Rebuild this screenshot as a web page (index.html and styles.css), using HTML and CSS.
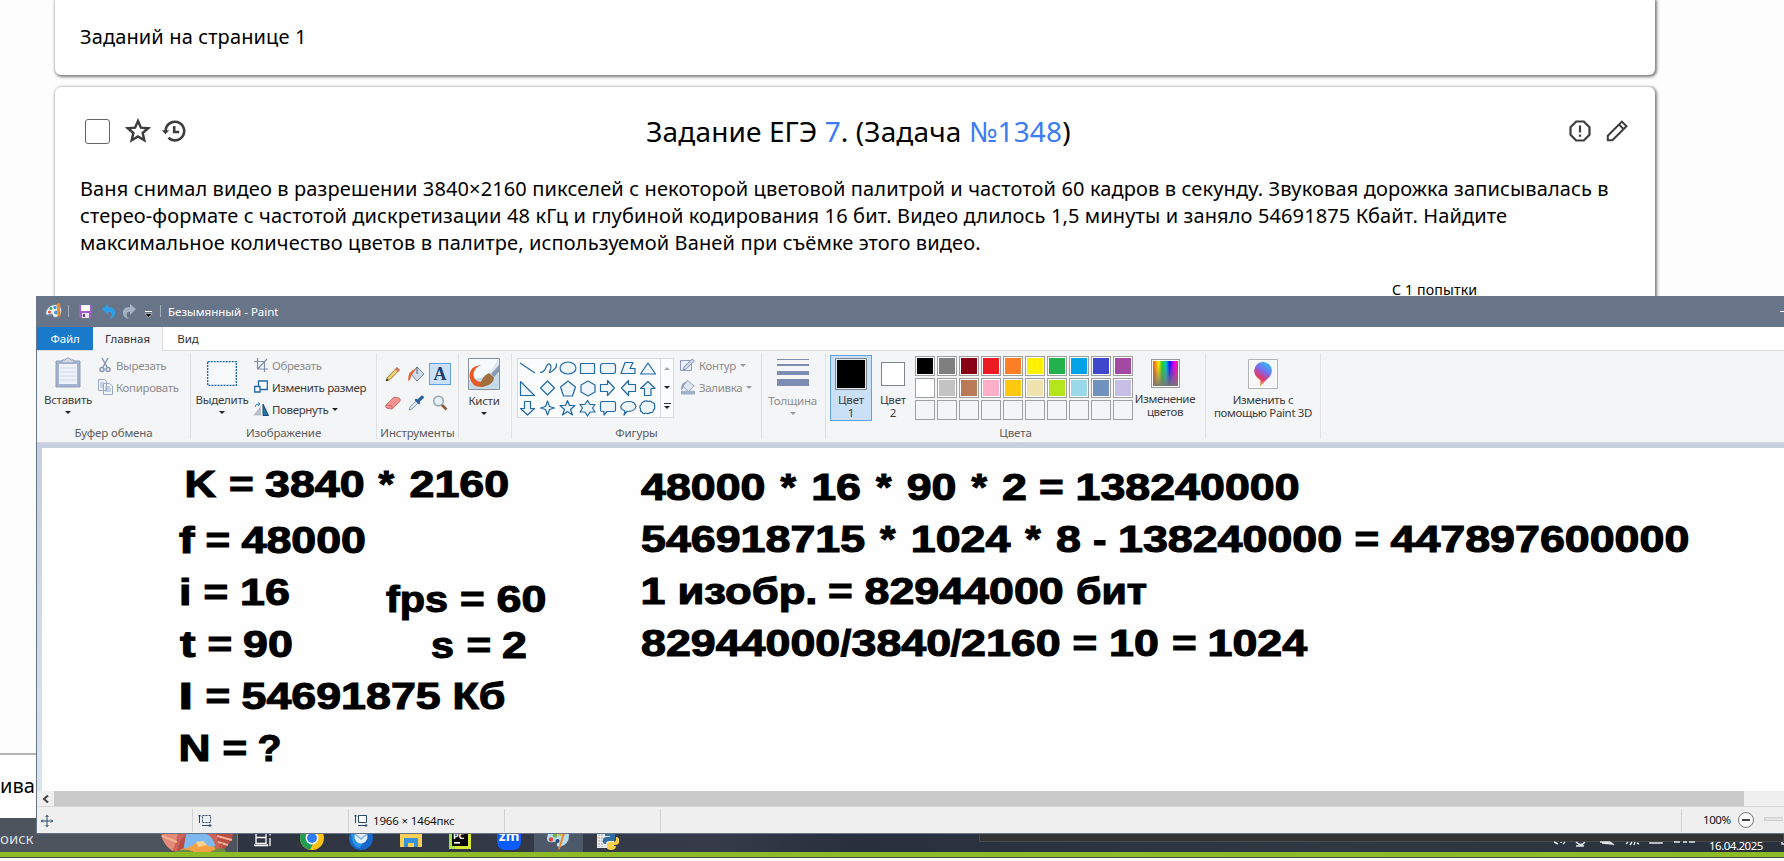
FILE: index.html
```
<!DOCTYPE html>
<html lang="ru">
<head>
<meta charset="utf-8">
<title>Задание ЕГЭ</title>
<link rel="stylesheet" href="styles.css">
</head>
<body>
<main class="page">
  <section class="card card-count">Заданий на странице 1</section>
  <section class="card card-task">
    <header class="task-head">
      <div class="task-tools">
        <span class="checkbox"></span>
        <svg class="ic-star" width="26" height="26" viewBox="0 0 24 24" fill="none" stroke="#3d3d3d" stroke-width="2.3"><path d="M12 2.8l2.7 6.1 6.6.6-5 4.4 1.5 6.6-5.800-3.500-5.800 3.500 1.500-6.600-5-4.400 6.600-.6z"/></svg>
        <svg class="ic-history" width="25" height="24" viewBox="0 0 25 24" fill="none" stroke="#3d3d3d" stroke-width="2.600"><path d="M4.600 12a9.300 9.300 0 1 1 2.800 6.700"/><path d="M13.200 7v6h5"/><path d="M.8 11.200h7.400l-3.700 4z" fill="#3d3d3d" stroke="none"/></svg>
      </div>
      <h1 class="task-title">Задание ЕГЭ <a>7</a>. (Задача <a>№1348</a>)</h1>
      <div class="task-tools">
        <svg width="22" height="22" viewBox="0 0 22 22" fill="none" stroke="#3d3d3d" stroke-width="2.200"><path d="M7.200 1.500h7.600l5.700 5.700v7.600l-5.700 5.700H7.200l-5.700-5.700V7.200z"/><path d="M11 5.500v7M11 14.500v2.200"/></svg>
        <svg class="ic-pen" width="22" height="22" viewBox="0 0 22 22" fill="none" stroke="#3d3d3d" stroke-width="2"><path d="M1.800 20.300v-4.600L15.900 1.600l4.600 4.600L6.400 20.300zM13 4.500l4.600 4.600"/></svg>
      </div>
    </header>
    <p class="task-text">Ваня снимал видео в разрешении 3840×2160 пикселей с некоторой цветовой палитрой и частотой 60 кадров в секунду. Звуковая дорожка записывалась в<br>стерео-формате с частотой дискретизации 48 кГц и глубиной кодирования 16 бит. Видео длилось 1,5 минуты и заняло 54691875 Кбайт. Найдите<br>максимальное количество цветов в палитре, используемой Ваней при съёмке этого видео.</p>
    <p class="attempt">С 1 попытки</p>
  </section>
  <section class="card-bottom">ива</section>
</main>

<footer class="taskbar">
  <div class="search">
    <span>оиск</span>
    <svg width="72" height="34" viewBox="0 0 72 34"><path d="M0 14Q4 32 16 34h42q12-6 14-20V8H0z" fill="#cd6258"/><path d="M0 17q10-4 17-1l-5 17Q3 28 0 17z" fill="#e58a78"/><path d="M17 34q1-20 19-20t19 20z" fill="#7db9ee"/><path d="M16 34l3-11 6-7-3 18zM72 17q-9-4-17-1l5 16 5-3 6-8z" fill="#bd4b45"/><path d="M20 31q9-1 15-6l7-1 5 4 7 1v5H20z" fill="#f3a044"/><path d="M35 24l7-1 4 4-9 2z" fill="#fbd18b"/><path d="M1 18l15 6M56 18l15 4M57 24l10 3" stroke="#f6b095" stroke-width="2"/><path d="M14 34q8-4 18 0zM50 34q9-5 14-2v2zM60 31l1-6M56 32l-3-4" fill="#6f8a43" stroke="#6f8a43"/></svg>
  </div>
  <div class="apps">
    <span class="app"><svg width="18" height="24" viewBox="0 0 18 24" fill="none" stroke="#fff" stroke-width="1.300"><path d="M2 7v4.500M12 7v4.500M2 11.500h10v6H2zM.5 20v-1.500M.5 19.500h13V18M16 7v2.500M16 12v8"/></svg></span>
    <span class="app"><svg width="24" height="24" viewBox="0 0 24 24"><circle cx="12" cy="12" r="12" fill="#fbc116"/><path d="M12 12L1.600 6A12 12 0 0 0 10 23.800L15 14z" fill="#1f9d55"/><path d="M1.600 6A12 12 0 0 1 22.400 6H12z" fill="#e33b2e"/><circle cx="12" cy="12" r="6.400" fill="#fff"/><circle cx="12" cy="12" r="5" fill="#2f7df0"/></svg></span>
    <span class="app"><svg width="24" height="24" viewBox="0 0 24 24"><circle cx="12" cy="12" r="12" fill="#1669c9"/><path d="M3 3q9-6 17 1l-9 18Q0 20 3 3z" fill="#2d93ea"/><circle cx="12" cy="11" r="6.500" fill="#e5f1fb"/><path d="M6 8l6 5 6-5" fill="none" stroke="#7cb2e4" stroke-width="1.600"/></svg></span>
    <span class="app"><svg width="22" height="22" viewBox="0 0 22 22"><path d="M0 2h9l2 2h11v17H0z" fill="#f9cf57"/><path d="M4 21v-9h14v9h-4v-4H8v4z" fill="#3a92d8"/></svg></span>
    <span class="app"><svg width="22" height="24" viewBox="0 0 22 24"><path d="M0 0h22v23H0z" fill="#d7e93a"/><path d="M0 0h6v23H0z" fill="#a9e045"/><path d="M3 3h16v17H3z" fill="#050505"/><path d="M5 16h6v1.600H5z" fill="#fff"/><text x="4" y="13" class="pc">PC</text></svg></span>
    <span class="app zm">zm</span>
    <span class="app app-active"><svg width="22" height="24" viewBox="0 0 22 24"><path d="M0 14Q0 2 11 2t11 8-9 11q-4 0-3-3t-4-2-6-2z" fill="#b8dcf0"/><circle cx="4" cy="13.500" r="2.200" fill="#e3473c"/><circle cx="8" cy="9.500" r="2.200" fill="#68b443"/><circle cx="13" cy="8.500" r="2" fill="#d8c04a"/><circle cx="10.500" cy="15" r="2" fill="#2a4c78"/><path d="M17 2l2.500 1-6.500 20-2 1z" fill="#ea8b2d"/></svg></span>
    <span class="app"><svg width="24" height="24" viewBox="0 0 24 24"><path d="M1 1h17v21H1z" fill="#e9e9e9"/><path d="M3 2v19M6 2v19" stroke="#a9a9a9" stroke-dasharray="2 1"/><path d="M9 9q0-3 5-3t5 3v4q0 2-3 2h-3q-3 0-3 3-4 0-3-4 0-3 4-3h3v-1H9z" fill="#2f6da5"/><path d="M20 11q4 0 3 5 0 3-4 3h-3v1h4q0 4-5 4t-4-4v-2q0-2 3-2h3q3 0 3-3z" fill="#f8cf46"/></svg></span>
  </div>
  <div class="tooltip-strip"></div>
  <div class="tray">
    <svg width="220" height="12" viewBox="0 0 220 12" fill="none" stroke="#e6e8ea" stroke-width="1.400"><path d="M4 0l4 2M11 0v1M15 0l-2 2M26 0q5 5 9 0M30 2v2M26 4h8M50 0h10M52 1l11 1M60 0l4 3M76 2l2-2M80 3l2-3M84 3l1-3M87 1l2 1M100 0v1h12V0M124 0h6M133 0h4M139 0h6M232 0v2h5"/></svg>
    <span class="date">16.04.2025</span>
  </div>
</footer>
<div class="green-line"></div>

<div class="paint">
  <div class="titlebar">
    <svg width="131" height="31" viewBox="0 0 131 31">
      <path d="M9 17q2-8 10-8 6 1 5 7-1 5-6 5-2 0-2-2t-3-1q-4 2-4-1z" fill="#eef4f8" stroke="#9cc4dc" stroke-width=".6"/><circle cx="12.500" cy="16" r="1.500" fill="#e64c3c"/><circle cx="14" cy="12.500" r="1.500" fill="#4aa84a"/><circle cx="18" cy="11.500" r="1.500" fill="#2f8fd3"/><circle cx="19" cy="16.500" r="2" fill="#4f9bc9"/><path d="M19.500 8l2-1 2 1-.5 3 .5 9-3 1-.5-9z" fill="#e98a2d"/>
      <path d="M31.500 9v12M123.500 9v12" stroke="#a2acb8"/>
      <path d="M42 9h13v13H42z" fill="#a15cc7"/><path d="M44 9h9v6h-9z" fill="#fff"/><path d="M45 17h7v5h-7z" fill="#e8e4f0"/><path d="M46 18h2v3h-2z" fill="#5b3a86"/>
      <path d="M65 13l6-5v3q8 0 7 7-1 4-6 5 4-4 2-6-1-2-3-1v3z" fill="#2d9fea"/>
      <path d="M99 13l-6-5v3q-8 0-7 7 1 4 6 5-4-4-2-6 1-2 3-1v3z" fill="#a5b2c4"/>
      <path d="M108 15.500h7" stroke="#fff"/><path d="M108 17.500h7l-3.500 4z" fill="#000" stroke="#fff" stroke-width=".5"/>
    </svg>
    <span class="title">Безымянный - Paint</span>
    <span class="minimize"></span>
  </div>
  <nav class="tabs"><span class="tab tab-file">Файл</span><span class="tab tab-home">Главная</span><span class="tab tab-view">Вид</span></nav>
  <div class="ribbon">
    <div class="group g-clip">
      <div class="body">
        <div class="big"><svg width="26" height="31" viewBox="0 0 26 31"><path d="M1 4h24v26H1z" fill="#a3b2cd" stroke="#8f9fbd"/><path d="M4 7h18v20H4z" fill="#eef2fa"/><path d="M5 11h16M5 15h16M5 19h16M5 23h16" stroke="#cdd7e8"/><path d="M7 3h3q3-4 6 0h3v3H7z" fill="#d0d8e6" stroke="#8f9fbd"/></svg><span>Вставить</span><i class="arr"></i></div>
        <div class="rows">
          <div class="row off"><svg width="16" height="16" viewBox="0 0 16 16" fill="none" stroke="#8797b5" stroke-width="1.500"><path d="M5 1l5 9M11 1l-5 9"/><circle cx="5" cy="12.500" r="2"/><circle cx="11" cy="12.500" r="2"/></svg>Вырезать</div>
          <div class="row off"><svg width="16" height="16" viewBox="0 0 16 16" fill="#f1f5fb" stroke="#9aaac6"><path d="M1.500.5h6l2 2v9h-8zM6.500 4.500h6l3 2.500v8.500h-9z"/><path d="M8 8h5M8 10h6M8 12h6M3 4h4M3 6h3M3 8h3"/></svg>Копировать</div>
        </div>
      </div>
      <div class="label">Буфер обмена</div>
    </div>
    <div class="group g-image">
      <div class="body">
        <div class="big"><svg width="30" height="31" viewBox="0 0 30 31"><path d="M.7 4.700h28.600v23.600H.7z" fill="#f6fafd" stroke="#1c62a6" stroke-width="1.300" stroke-dasharray="2 1"/></svg><span>Выделить</span><i class="arr"></i></div>
        <div class="rows">
          <div class="row off"><svg width="14" height="14" viewBox="0 0 14 14" fill="none" stroke="#8090ad" stroke-width="1.200"><path d="M3.500 0v11H14M0 3.500h10.500V14M4 10.500L13 1"/></svg>Обрезать</div>
          <div class="row"><svg width="14" height="14" viewBox="0 0 14 14" fill="#fff" stroke="#1f66a8" stroke-width="1.300"><path d="M4.500 1h8.800v8.500H4.500z"/><path d="M.7 6.500H6v5.500H.7z"/></svg>Изменить размер</div>
          <div class="row"><svg width="16" height="14" viewBox="0 0 16 14"><path d="M8 4v9.500H0z" fill="#b9bfc7"/><path d="M10 2l5.500 11.500H10z" fill="#2676a8" stroke="#174a73"/><path d="M2 5q0-3 4-3M5 .5L7 2 5 4" fill="none" stroke="#2f7ed0"/></svg>Повернуть<i class="arr"></i></div>
        </div>
      </div>
      <div class="label">Изображение</div>
    </div>
    <div class="group g-tools">
      <div class="tools">
        <span><svg width="16" height="16" viewBox="0 0 16 16"><path d="M1 15l1.500-3.500L12 1.500l2.500 2.500L5 13.500z" fill="#f2d06b" stroke="#7b6433" stroke-width=".8"/><path d="M12 1.500l2.500 2.500L13 6l-3-3z" fill="#d6706c"/><path d="M1 15l.8-2.500 1.700 1.700z" fill="#222"/></svg></span>
        <span><svg width="18" height="16" viewBox="0 0 18 16"><path d="M10 1l7 7-7 7-6-7z" fill="#cfdbe8" stroke="#6f8296"/><path d="M10 1v7" stroke="#566"/><path d="M9 3Q1 4 1 15q3-1 3-5z" fill="#e4623a"/></svg></span>
        <span class="tool-on">A</span>
        <span><svg width="16" height="14" viewBox="0 0 16 14"><path d="M1 9l7-7q1-1 2-.8l4.500 1q1 .8.500 3l-7 7q-1 1-2 .8l-4.500-1Q0 11 1 9z" fill="#f19490" stroke="#b95c5c" stroke-width=".8"/><path d="M1 9l6 1v3" fill="none" stroke="#c76a69"/></svg></span>
        <span><svg width="16" height="16" viewBox="0 0 16 16"><path d="M1 15l1-3 6-6 2 2-6 6z" fill="#dceaf5" stroke="#6d8aa5" stroke-width=".8"/><path d="M6.500 5l1.500-1.500 1.500 1L13 1q1-1 2.300.2t0 2.300L11.500 7l1 1-1.500 1.500z" fill="#2a5f9e"/></svg></span>
        <span><svg width="16" height="16" viewBox="0 0 16 16"><circle cx="6.500" cy="6" r="4.800" fill="#e4f1fb" stroke="#93a2b0" stroke-width="1.400"/><path d="M10 10l4.500 4.500" stroke="#8b5a3a" stroke-width="2.600"/></svg></span>
      </div>
      <div class="label">Инструменты</div>
    </div>
    <div class="group g-brush">
      <div class="big"><svg width="32" height="32" viewBox="0 0 32 32"><path d="M.5.5h31v31H.5z" fill="#f4f9fc" stroke="#8a9097"/><path d="M1 22l30-6v15H1z" fill="#c6dcea"/><path d="M13 7Q1 8 1.500 19q2 10 12 10 6 0 4-5Q6 25 5.500 17q0-7 7.500-10z" fill="#ea5a24"/><path d="M12 28.500q1-10 9-13.500l5 4.500q-1 9-14 9z" fill="#a0713f"/><path d="M22 15L31 1v13l-5 5z" fill="#8b9bb3"/><path d="M21.500 15L31 1v6l-8 9z" fill="#dfe7f0"/></svg><span>Кисти</span><i class="arr"></i></div>
    </div>
    <div class="group g-shapes">
      <div class="body">
        <div class="gallery">
          <svg width="142" height="58" viewBox="0 0 142 58" fill="#eef6fb" stroke="#2468a5" stroke-width="1.200" stroke-linejoin="round">
            <path d="M2 4l15 10"/><path d="M22 13.500q4 0 6-5t4-3 0 6 3 0 3-7" fill="none"/><ellipse cx="50" cy="9" rx="8" ry="6"/><path d="M62.500 4.500h14v10h-14z"/><rect x="82.500" y="4.500" width="15" height="10" rx="2.500"/><path d="M103 14.500l4-11h8l-3 6h5v5z"/><path d="M130 4l7.500 11h-15z"/>
            <path d="M2.500 22.500l14 14h-14z"/><path d="M29.500 22l7 7-7 7-7-7z"/><path d="M50 22l7.500 6-3 9h-9l-3-9z"/><path d="M70 22l7 4v7l-7 4-7-4v-7z"/><path d="M82.500 25.500h7v-4l7 7.500-7 7.500v-4h-7z"/><path d="M117.500 25.500h-7v-4l-7 7.500 7 7.500v-4h7z"/><path d="M126.500 36.500v-7h-4l7.500-7 7 7h-4v7z"/>
            <path d="M6.500 42.500v7h-4l7 6.500 7-6.500h-4v-7z"/><path d="M29.500 42l2 5.500 5 1.500-5 1.500-2 5.500-2-5.500-5-1.500 5-1.500z"/><path d="M49.500 41.500l2 5h5.500l-4.500 4 2 5.500-5-3.500-5 3.500 2-5.500-4.500-4H47.500z"/><path d="M69.500 41.500l2.500 4h5l-2.500 3.500 2.500 4h-5l-2.500 4-2.500-4h-5l2.500-4-2.500-3.500h5z"/><path d="M84 42.500h12q1.500 0 1.500 1.500v7q0 1.500-1.500 1.500h-7l-3 3.500v-3.500h-2q-1.500 0-1.500-1.500v-7q0-1.500 1.500-1.500z"/><path d="M106 56l1-4q-5-2-4-5 2-4.500 8-4.500t7 5q-1 5-9 5z"/><path d="M125 43q3-2 5-.5 3-1 4 1 3 0 2.500 3 1 3-1 4.500 0 3-3.500 2.500-2 2-4 .5-3 1.500-4-1-2-.5-1.500-3-1.500-3 .5-4 0-2 2-3z"/>
          </svg>
          <div class="scroll"><i class="arr up"></i><i class="arr"></i><i class="arr more"></i></div>
        </div>
        <div class="rows">
          <div class="row off"><svg width="16" height="14" viewBox="0 0 16 14" fill="#e9eef7" stroke="#8c9cba"><path d="M.5 2.500h11v10H.5z"/><path d="M3 12l1-3 8-8 2.500 2L6 11z" fill="#c9d4e6"/></svg>Контур<i class="arr dim"></i></div>
          <div class="row off"><svg width="16" height="16" viewBox="0 0 17 16"><path d="M1 12h15v4H1z" fill="#9fb0cc"/><path d="M8 1l7 6-6 6-6-6z" fill="#dfe6f1" stroke="#8c9cba"/><path d="M8 2Q1 3 1 11q3 0 3-5z" fill="#8c9cba"/></svg>Заливка<i class="arr dim"></i></div>
        </div>
      </div>
      <div class="label">Фигуры</div>
    </div>
    <div class="group g-size">
      <div class="big off"><svg width="32" height="32" viewBox="0 0 32 32" fill="#7d8eb2"><path d="M0 1h32v1H0zM0 6h32v2H0zM0 13h32v4H0zM0 21h32v7H0z"/></svg><span>Толщина</span><i class="arr dim"></i></div>
    </div>
    <div class="group g-colors">
      <div class="body">
        <div class="color color-on"><b class="well well-black"></b><span>Цвет<br>1</span></div>
        <div class="color"><b class="well well-white"></b><span>Цвет<br>2</span></div>
        <div class="palette">
          <b class="c1"></b><b class="c2"></b><b class="c3"></b><b class="c4"></b><b class="c5"></b><b class="c6"></b><b class="c7"></b><b class="c8"></b><b class="c9"></b><b class="c10"></b>
          <b class="c11"></b><b class="c12"></b><b class="c13"></b><b class="c14"></b><b class="c15"></b><b class="c16"></b><b class="c17"></b><b class="c18"></b><b class="c19"></b><b class="c20"></b>
          <b></b><b></b><b></b><b></b><b></b><b></b><b></b><b></b><b></b><b></b>
        </div>
        <div class="wide"><b class="spectrum"></b><span>Изменение<br>цветов</span></div>
      </div>
      <div class="label">Цвета</div>
    </div>
    <div class="group g-3d">
      <div class="wide"><svg width="30" height="30" viewBox="0 0 30 30"><defs><linearGradient id="drop" x1="0.8" y1="0" x2="0.3" y2="1"><stop offset="0" stop-color="#27c5f2"/><stop offset=".4" stop-color="#7a6cf0"/><stop offset=".68" stop-color="#e0356f"/><stop offset="1" stop-color="#f7b52c"/></linearGradient></defs><path d="M.5.500h29v29H.5z" fill="#f6f6f7" stroke="#b0b2b5"/><path d="M1.500 1.500h27v27h-27z" fill="none" stroke="#fff"/><path d="M15 3a8.600 8.600 0 0 1 8.800 9q0 5-6.300 9.500L12 27.500l.5-6Q6 17 6.200 11.500A8.600 8.600 0 0 1 15 3z" fill="url(#drop)"/></svg><span>Изменить с<br>помощью Paint 3D</span></div>
    </div>
  </div>
  <div class="workspace">
    <svg class="canvas" width="1742" height="343" viewBox="42 448 1742 343">
      <g class="notes">
        <text y="496.500"><tspan x="184.500" textLength="31.500" lengthAdjust="spacingAndGlyphs">K</tspan> <tspan x="229" textLength="24.700" lengthAdjust="spacingAndGlyphs">=</tspan> <tspan x="265" textLength="99.600" lengthAdjust="spacingAndGlyphs">3840</tspan> <tspan x="378.500" textLength="15.500" lengthAdjust="spacingAndGlyphs">*</tspan> <tspan x="409.500" textLength="99.600" lengthAdjust="spacingAndGlyphs">2160</tspan></text>
        <text y="552.500"><tspan x="179" textLength="15.500" lengthAdjust="spacingAndGlyphs">f</tspan> <tspan x="205.500" textLength="24.700" lengthAdjust="spacingAndGlyphs">=</tspan> <tspan x="241.500" textLength="124.500" lengthAdjust="spacingAndGlyphs">48000</tspan></text>
        <text y="604.500"><tspan x="179" textLength="12.500" lengthAdjust="spacingAndGlyphs">i</tspan> <tspan x="203.500" textLength="24.700" lengthAdjust="spacingAndGlyphs">=</tspan> <tspan x="240" textLength="49.800" lengthAdjust="spacingAndGlyphs">16</tspan></text>
        <text y="611.500"><tspan x="386" textLength="62" lengthAdjust="spacingAndGlyphs">fps</tspan> <tspan x="460" textLength="24.700" lengthAdjust="spacingAndGlyphs">=</tspan> <tspan x="496.500" textLength="49.800" lengthAdjust="spacingAndGlyphs">60</tspan></text>
        <text y="656.500"><tspan x="180" textLength="15.500" lengthAdjust="spacingAndGlyphs">t</tspan> <tspan x="207.500" textLength="24.700" lengthAdjust="spacingAndGlyphs">=</tspan> <tspan x="243" textLength="49.800" lengthAdjust="spacingAndGlyphs">90</tspan></text>
        <text y="657.500"><tspan x="431" textLength="23" lengthAdjust="spacingAndGlyphs">s</tspan> <tspan x="466.500" textLength="24.700" lengthAdjust="spacingAndGlyphs">=</tspan> <tspan x="502" textLength="24.900" lengthAdjust="spacingAndGlyphs">2</tspan></text>
        <text y="708.500"><tspan x="178.500" textLength="14.500" lengthAdjust="spacingAndGlyphs">I</tspan> <tspan x="205.500" textLength="24.700" lengthAdjust="spacingAndGlyphs">=</tspan> <tspan x="241.500" textLength="199.200" lengthAdjust="spacingAndGlyphs">54691875</tspan> <tspan x="452.500" textLength="53" lengthAdjust="spacingAndGlyphs">Кб</tspan></text>
        <text y="760.500"><tspan x="178.500" textLength="32" lengthAdjust="spacingAndGlyphs">N</tspan> <tspan x="222.500" textLength="24.700" lengthAdjust="spacingAndGlyphs">=</tspan> <tspan x="257.500" textLength="24" lengthAdjust="spacingAndGlyphs">?</tspan></text>
        <text y="499.500"><tspan x="641" textLength="124.500" lengthAdjust="spacingAndGlyphs">48000</tspan> <tspan x="780.500" textLength="15.500" lengthAdjust="spacingAndGlyphs">*</tspan> <tspan x="811.200" textLength="49.800" lengthAdjust="spacingAndGlyphs">16</tspan> <tspan x="876" textLength="15.500" lengthAdjust="spacingAndGlyphs">*</tspan> <tspan x="906.700" textLength="49.800" lengthAdjust="spacingAndGlyphs">90</tspan> <tspan x="971.500" textLength="15.500" lengthAdjust="spacingAndGlyphs">*</tspan> <tspan x="1002" textLength="24.900" lengthAdjust="spacingAndGlyphs">2</tspan> <tspan x="1039" textLength="24.700" lengthAdjust="spacingAndGlyphs">=</tspan> <tspan x="1075.500" textLength="224.100" lengthAdjust="spacingAndGlyphs">138240000</tspan></text>
        <text y="551.500"><tspan x="641" textLength="224.100" lengthAdjust="spacingAndGlyphs">546918715</tspan> <tspan x="880" textLength="15.500" lengthAdjust="spacingAndGlyphs">*</tspan> <tspan x="910.800" textLength="99.600" lengthAdjust="spacingAndGlyphs">1024</tspan> <tspan x="1025.300" textLength="15.500" lengthAdjust="spacingAndGlyphs">*</tspan> <tspan x="1056" textLength="24.900" lengthAdjust="spacingAndGlyphs">8</tspan> <tspan x="1093" textLength="13.500" lengthAdjust="spacingAndGlyphs">-</tspan> <tspan x="1118" textLength="224.100" lengthAdjust="spacingAndGlyphs">138240000</tspan> <tspan x="1354.500" textLength="24.700" lengthAdjust="spacingAndGlyphs">=</tspan> <tspan x="1390.500" textLength="298.800" lengthAdjust="spacingAndGlyphs">447897600000</tspan></text>
        <text y="603.500"><tspan x="640.500" textLength="24.900" lengthAdjust="spacingAndGlyphs">1</tspan> <tspan x="677.500" textLength="140" lengthAdjust="spacingAndGlyphs">изобр.</tspan> <tspan x="828" textLength="24.700" lengthAdjust="spacingAndGlyphs">=</tspan> <tspan x="864.500" textLength="199.200" lengthAdjust="spacingAndGlyphs">82944000</tspan> <tspan x="1076" textLength="71" lengthAdjust="spacingAndGlyphs">бит</tspan></text>
        <text y="655.500"><tspan x="641" textLength="199.200" lengthAdjust="spacingAndGlyphs">82944000</tspan><tspan x="840.500" textLength="10.800" lengthAdjust="spacingAndGlyphs">/</tspan><tspan x="851.500" textLength="99.600" lengthAdjust="spacingAndGlyphs">3840</tspan><tspan x="950.500" textLength="10.800" lengthAdjust="spacingAndGlyphs">/</tspan><tspan x="961" textLength="99.600" lengthAdjust="spacingAndGlyphs">2160</tspan> <tspan x="1072.500" textLength="24.700" lengthAdjust="spacingAndGlyphs">=</tspan> <tspan x="1109" textLength="49.800" lengthAdjust="spacingAndGlyphs">10</tspan> <tspan x="1172" textLength="24.700" lengthAdjust="spacingAndGlyphs">=</tspan> <tspan x="1207.500" textLength="99.600" lengthAdjust="spacingAndGlyphs">1024</tspan></text>
      </g>
    </svg>
  </div>
  <div class="hscroll"><span class="hbtn"><svg width="7" height="8" viewBox="0 0 7 8"><path d="M6 .5L2 4l4 3.500" fill="none" stroke="#444" stroke-width="2"/></svg></span><span class="thumb"></span></div>
  <div class="status">
    <span class="cell"><svg width="12" height="12" viewBox="0 0 12 12" fill="none" stroke="#27496f"><path d="M6 0v12M0 6h12M4.500 2L6 .5 7.500 2M4.500 10L6 11.500 7.500 10M2 4.500L.5 6 2 7.500M10 4.500L11.500 6 10 7.500"/></svg></span>
    <span class="cell"><svg width="14" height="13" viewBox="0 0 14 13" fill="none" stroke="#27496f"><path d="M4.500 1.500h8v7h-8z" stroke-dasharray="2 1"/><path d="M1.500 9V1M0 2.500L1.500 1 3 2.500M4 11.500h9M11.500 10l1.500 1.500-1.500 1.500"/></svg></span>
    <span class="cell"><svg width="14" height="13" viewBox="0 0 14 13" fill="none" stroke="#27496f"><path d="M4.500 1.500h8v7h-8z" fill="#fff"/><path d="M1.500 9V1M0 2.500L1.500 1 3 2.500M4 11.500h9M11.500 10l1.500 1.500-1.500 1.500"/></svg><em>1966 × 1464пкс</em></span>
    <span class="cell"></span>
    <span class="cell cell-rest"></span>
    <span class="zoom">100%<svg width="46" height="18" viewBox="0 0 46 18"><circle cx="9" cy="9" r="7.500" fill="#fafafa" stroke="#777"/><path d="M5 9h8" stroke="#444" stroke-width="2"/><path d="M27.500 6.500H47v3H27.500z" fill="#e4e4e4" stroke="#cfcfcf"/></svg></span>
  </div>
</div>
</body>
</html>
```
FILE: styles.css
```
* { box-sizing: border-box; }
body {
  margin: 0;
  width: 1784px;
  height: 861px;
  overflow: hidden;
  position: relative;
  background: #fff;
  color: #000;
  font-family: "Noto Sans", "Open Sans", sans-serif;
}
.page { height: 818px; background: #fdfdfd; overflow: hidden; }
.card {
  width: 1600px;
  margin-left: 55px;
  padding: 0 25px;
  border-radius: 6px;
  background: #fff;
  box-shadow: 1px 1px 3px 1px rgba(0, 0, 0, .5);
  font-size: 20px;
  letter-spacing: .125px;
}
.card-count { height: 75px; padding-top: 23px; line-height: 27px; border-radius: 0 0 6px 6px; }
.card-task { height: 640px; margin-top: 12px; }
.task-head { display: flex; justify-content: space-between; align-items: center; height: 88px; }
.task-tools { display: flex; align-items: center; width: 130px; padding-left: 5px; }
.task-tools:last-child { justify-content: flex-end; padding: 0 2px 0 0; }
.checkbox { width: 25px; height: 25px; border: 1px solid #666; border-radius: 3px; background: #fff; }
.ic-star { margin-left: 15px; }
.ic-history { margin-left: 10px; }
.ic-pen { margin-left: 15px; }
.task-title { margin: 0; padding-left: 7px; font-size: 28px; font-weight: 400; white-space: nowrap; }
.task-title a { color: #3b7cf5; }
.task-text { margin: 0; line-height: 27px; white-space: nowrap; }
.attempt { margin: 24px 0 0 1312px; font-size: 14.200px; line-height: 20px; }
.card-bottom {
  height: 66px;
  margin-top: 26px;
  padding: 17px 0 0 0;
  border-top: 2px solid #b4b4b4;
  background: #fff;
  font-size: 20px;
  line-height: 27px;
}

.taskbar {
  position: absolute;
  left: 0;
  top: 818px;
  width: 1784px;
  height: 34px;
  display: flex;
  overflow: hidden;
  background: linear-gradient(90deg, #2a323e, #363b47 40%, #27303c 48%, #303844 75%, #29313d);
}
.search {
  display: flex;
  flex: none;
  justify-content: space-between;
  width: 238px;
  padding-right: 4px;
  border-right: 1px solid #767c86;
  background: #4d545e;
  color: #dadde0;
  font-size: 15px;
  line-height: 41px;
}
.apps { display: flex; flex: none; width: 395px; }
.app { display: flex; flex: none; justify-content: center; width: 49.300px; height: 34px; padding-top: 8px; }
.app-active { background: #4d5868; }
.pc { font: bold 9px "Noto Sans", sans-serif; fill: #fff; }
.zm {
  width: 24px;
  height: 24px;
  margin: 8px 12.650px 0;
  padding: 0;
  border-radius: 8px;
  background: #0b5cff;
  color: #fff;
  font-size: 14px;
  font-weight: 700;
  line-height: 20px;
}
.tooltip-strip {
  flex: none;
  width: 805px;
  height: 24px;
  margin-left: 346px;
  border: 1px solid #484a4e;
  background: #333;
}
.tray { position: absolute; right: 0; bottom: 0; width: 234px; height: 17px; display: flex; flex-direction: column; }
.tray svg { position: absolute; left: 0; top: 7px; overflow: visible; }
.date { margin: 3px 0 0 159px; color: #fff; font-size: 11.500px; line-height: 16px; letter-spacing: -.5px; }
.green-line { position: absolute; left: 0; top: 852px; width: 1784px; height: 6px; background: #8dbb27; border-bottom: 1px solid #4b4a4f; }

.paint {
  position: absolute;
  left: 36px;
  top: 296px;
  width: 1748px;
  height: 538px;
  display: flex;
  flex-direction: column;
  overflow: hidden;
  border-left: 1px solid #687588;
  border-bottom: 1px solid #687588;
  background: #fff;
  font-size: 11.500px;
}
.titlebar { display: flex; flex: none; align-items: center; height: 31px; background: #687588; color: #fff; }
.titlebar svg { flex: none; }
.title { flex: 1; line-height: 16px; white-space: nowrap; }
.minimize { width: 4px; height: 1px; background: #fff; }
.tabs { display: flex; flex: none; height: 24px; border-bottom: 1px solid #d9dadc; background: #fff; color: #333; }
.tab { height: 24px; line-height: 24px; text-align: center; }
.tab-file { width: 56px; height: 23px; background: #1979ca; color: #fff; letter-spacing: -.2px; }
.tab-home { width: 70px; background: #f4f5f7; border-right: 1px solid #dcdddf; }
.tab-view { width: 50px; }
.ribbon { display: flex; flex: none; height: 92px; border-bottom: 1px solid #d5d7da; background: #f4f5f7; color: #3c3c3c; letter-spacing: -.12px; }
.group { display: flex; flex: none; flex-direction: column; height: 86px; margin-top: 2px; border-right: 1px solid #dfe1e4; }
.body { display: flex; height: 71px; }
.label { margin-bottom: -3px; height: 18px; line-height: 18px; text-align: center; color: #5c5c5c; }
.g-clip { width: 154px; }
.g-image { width: 186px; }
.g-tools { width: 82px; }
.g-brush { width: 53px; }
.g-shapes { width: 250px; }
.g-size { width: 64px; }
.g-colors { width: 380px; }
.g-3d { width: 115px; }
.big { display: flex; flex: none; flex-direction: column; align-items: center; width: 60px; padding-top: 3px; }
.big svg { height: 33px; }
.big span { line-height: 16px; margin-top: 3px; white-space: nowrap; letter-spacing: -.25px; }
.big .arr { margin-top: 3px; }
.g-clip .big { width: 60px; padding-left: 2px; }
.g-image .big { width: 62px; }
.g-brush .big, .g-size .big { width: 100%; padding: 5px 2px 0 0; }
.g-brush .big svg, .g-size .big svg { height: 32px; }
.rows { display: flex; flex-direction: column; padding-top: 1px; white-space: nowrap; letter-spacing: -.35px; }
.row { display: flex; align-items: center; gap: 3px; height: 22px; }
.g-image .row svg { width: 16px; }
.off { color: #8d8d8d; }
.arr { flex: none; width: 0; height: 0; border: 3px solid transparent; border-top: 3px solid #222; border-bottom: 0; }
.row .arr { margin-left: 1px; }
.dim { border-top-color: #9a9a9a; }
.up { border-top: 0; border-bottom: 3px solid #aaa; }
.more { position: relative; }
.more::before { content: ""; position: absolute; left: -3px; top: -6px; width: 7px; height: 1px; background: #333; }
.tools { display: grid; grid-template-columns: repeat(3, 23.500px); grid-auto-rows: 29px; height: 71px; align-content: start; padding: 6px 0 0 4px; }
.tools span { display: flex; align-items: center; justify-content: center; }
.tools .tool-on {
  width: 22px;
  height: 22px;
  margin: 4px 0 0 1px;
  border: 1px solid #62a2e4;
  background: #c9e0f7;
  color: #1d3d66;
  font: bold 18px/20px "Liberation Serif", serif;
}
.gallery { display: flex; width: 157px; height: 60px; margin: 5px 6px 0 5px; border: 1px solid #d5d8dc; background: #fafcfe; }
.gallery svg { flex: none; }
.scroll { display: flex; flex: 1; flex-direction: column; align-items: center; justify-content: space-around; border-left: 1px solid #d5d8dc; }
.color { display: flex; flex-direction: column; align-items: center; width: 42px; height: 66px; line-height: 13px; text-align: center; }
.g-colors .body { padding: 2px 0 0 4px; }
.color-on { border: 1px solid #62a2e4; background: #c9e0f7; }
.well { flex: none; }
.well-black { width: 32px; height: 32px; margin: 2px 0 3px; border: 1px solid #80858c; background: #000; box-shadow: inset 0 0 0 1px #dfeaf5; }
.well-white { width: 24px; height: 24px; margin: 7px 0 7px; border: 1px solid #80858c; background: #fff; }
.palette { display: grid; flex: none; grid-template-columns: repeat(10, 20px); grid-auto-rows: 20px; gap: 2px; margin: 1px 0 0 1px; }
.palette b { border: 1px solid #a0a0a0; box-shadow: inset 0 0 0 1px #fff; }
.palette b:not([class]) { box-shadow: none; }
.wide { display: flex; flex-direction: column; align-items: center; padding-top: 4px; text-align: center; line-height: 13px; white-space: nowrap; letter-spacing: -.35px; }
.g-colors .wide { width: 66px; margin-left: -1px; }
.g-3d .wide { padding-top: 6px; }
.wide span { margin-top: 4px; }
.spectrum {
  width: 29px;
  height: 29px;
  border: 1px solid #999;
  box-shadow: inset 0 0 0 1px #fff;
  background: linear-gradient(0deg, #777, rgba(128, 128, 128, 0) 85%), linear-gradient(90deg, #f33, #f90 14%, #fe0 24%, #2c2 38%, #0cc 52%, #11f 65%, #b0f 78%, #f0c 88%, #f22);
}
.c1 { background: #000; } .c2 { background: #7f7f7f; } .c3 { background: #880015; } .c4 { background: #ed1c24; } .c5 { background: #ff7f27; }
.c6 { background: #fff200; } .c7 { background: #22b14c; } .c8 { background: #00a2e8; } .c9 { background: #3f48cc; } .c10 { background: #a349a4; }
.c11 { background: #fff; } .c12 { background: #c3c3c3; } .c13 { background: #b97a57; } .c14 { background: #ffaec9; } .c15 { background: #ffc90e; }
.c16 { background: #efe4b0; } .c17 { background: #b5e61d; } .c18 { background: #99d9ea; } .c19 { background: #7092be; } .c20 { background: #c8bfe7; }
.workspace { flex: none; height: 348px; padding: 5px 0 0 5px; background: linear-gradient(180deg, #c5cfdf, #dae4f1); overflow: hidden; }
.canvas { display: block; background: #fefefe; }
.notes { font: bold 36.500px "Liberation Sans", sans-serif; stroke: #000; stroke-width: 1.100px; }
.hscroll { display: flex; flex: none; height: 16px; background: #efefef; border-bottom: 1px solid #d7d7d7; }
.hbtn { display: flex; align-items: center; justify-content: center; width: 17px; }
.thumb { width: 1690px; height: 15px; background: #cacaca; }
.status { display: flex; flex: none; height: 26px; background: #efefef; }
.cell { display: flex; flex: none; align-items: center; gap: 5px; width: 156px; height: 23px; margin-top: 2px; padding-left: 4px; border-right: 1px solid #d2d2d2; }
.cell + .cell { padding-left: 5px; }
.cell em { font-style: normal; color: #111; white-space: nowrap; letter-spacing: -.15px; }
.cell-rest { width: 1021px; }
.zoom { display: flex; align-items: center; gap: 6px; height: 25px; padding-left: 21px; color: #111; letter-spacing: -.4px; }
.zoom svg { flex: none; }
```
